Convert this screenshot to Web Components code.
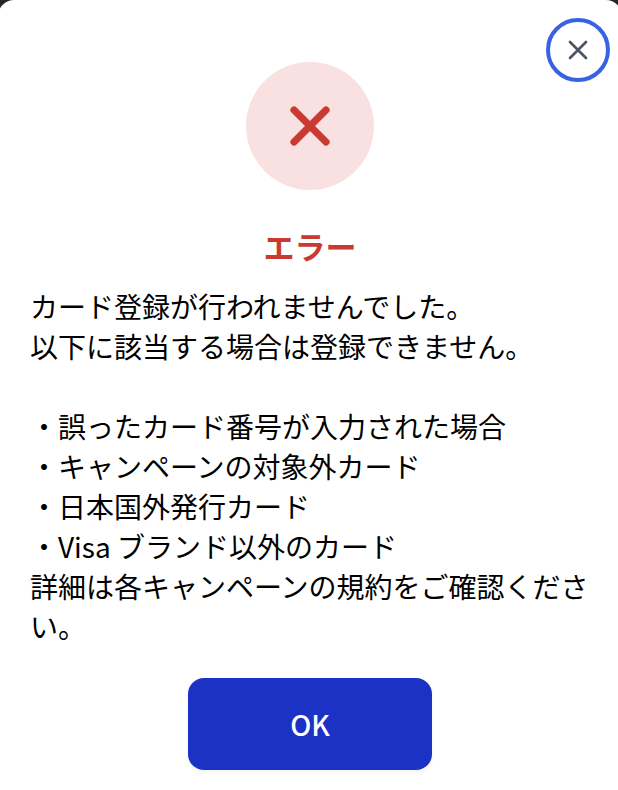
<!DOCTYPE html>
<html lang="ja">
<head>
<meta charset="utf-8">
<meta name="viewport" content="width=device-width, initial-scale=1">
<title>エラー</title>
<style>
  body {
    margin: 0;
    min-height: 100vh;
    display: grid;
    overflow: hidden;
    background: #26262a;
    font-family: "Noto Sans CJK JP", sans-serif;
    font-size: 28px;
    line-height: 40px;
    color: #000;
  }
</style>
</head>
<body>

<error-dialog>
  <close-button slot="close"></close-button>
  <error-icon slot="icon"></error-icon>
  <span slot="title">エラー</span>
  <error-message></error-message>
  <ok-button slot="action">OK</ok-button>
</error-dialog>

<script>
const dialogTemplate = document.createElement("template");
dialogTemplate.innerHTML = /*html*/ `
  <style>
    :host {
      display: block;
      position: relative;
      box-sizing: border-box;
      margin: 0 -4px 0 -2px;
      padding: 62px 32px 20px;
      border-radius: 16px 16px 0 0;
      background: #fff;
    }
    section {
      display: flex;
      flex-direction: column;
    }
    h1 {
      margin: 36px 0 20px;
      font-size: 31px;
      font-weight: 700;
      line-height: 40px;
      text-align: center;
      color: #c93a32;
    }
    .icon,
    .action {
      display: flex;
      justify-content: center;
    }
    .action {
      margin-top: 32px;
    }
    /* floats over the corner of the dialog */
    .close {
      position: absolute;
      top: 18px;
      right: 12px;
    }
  </style>
  <section role="dialog" aria-modal="true" aria-labelledby="title">
    <div class="icon"><slot name="icon"></slot></div>
    <h1 id="title"><slot name="title"></slot></h1>
    <slot></slot>
    <div class="action"><slot name="action"></slot></div>
    <div class="close"><slot name="close"></slot></div>
  </section>
`;

class ErrorDialog extends HTMLElement {
  constructor() {
    super();
    this.attachShadow({ mode: "open" });
    this.shadowRoot.appendChild(dialogTemplate.content.cloneNode(true));
  }

  connectedCallback() {
    this.addEventListener("dialog-close", () => this.close());
  }

  close() {
    this.hidden = true;
    this.style.display = "none";
  }
}
customElements.define("error-dialog", ErrorDialog);

const iconTemplate = document.createElement("template");
iconTemplate.innerHTML = /*html*/ `
  <style>
    :host {
      display: flex;
      align-items: center;
      justify-content: center;
      width: 128px;
      height: 128px;
      border-radius: 50%;
      background: #fae1e1;
      color: #c93a32;
    }
    svg {
      width: 64px;
      height: 64px;
    }
  </style>
  <svg viewBox="0 0 24 24" fill="none" stroke="currentColor" stroke-width="2.7" stroke-linecap="round" stroke-linejoin="round" aria-hidden="true">
    <path d="M6 18L18 6M6 6l12 12"/>
  </svg>
`;

class ErrorIcon extends HTMLElement {
  constructor() {
    super();
    this.attachShadow({ mode: "open" });
    this.shadowRoot.appendChild(iconTemplate.content.cloneNode(true));
  }
}
customElements.define("error-icon", ErrorIcon);

const messageTemplate = document.createElement("template");
messageTemplate.innerHTML = /*html*/ `
  <style>
    :host {
      display: block;
    }
    p {
      margin: 0;
    }
    ul {
      margin: 40px 0 0;
      padding: 0;
      list-style: none;
    }
  </style>
  <p>カード登録が行われませんでした。<br>以下に該当する場合は登録できません。</p>
  <ul>
    <li>・誤ったカード番号が入力された場合</li>
    <li>・キャンペーンの対象外カード</li>
    <li>・日本国外発行カード</li>
    <li>・Visa ブランド以外のカード</li>
  </ul>
  <p>詳細は各キャンペーンの規約をご確認ください。</p>
`;

class ErrorMessage extends HTMLElement {
  constructor() {
    super();
    this.attachShadow({ mode: "open" });
    this.shadowRoot.appendChild(messageTemplate.content.cloneNode(true));
  }
}
customElements.define("error-message", ErrorMessage);

const closeTemplate = document.createElement("template");
closeTemplate.innerHTML = /*html*/ `
  <style>
    :host {
      display: block;
    }
    button {
      display: flex;
      align-items: center;
      justify-content: center;
      box-sizing: border-box;
      width: 64px;
      height: 64px;
      padding: 0;
      border: 4px solid #3662e3;
      border-radius: 50%;
      background: #fff;
      color: #4b5563;
      cursor: pointer;
    }
    svg {
      width: 32px;
      height: 32px;
    }
  </style>
  <button type="button" aria-label="閉じる">
    <svg viewBox="0 0 24 24" fill="none" stroke="currentColor" stroke-width="2" stroke-linecap="round" stroke-linejoin="round" aria-hidden="true">
      <path d="M6 18L18 6M6 6l12 12"/>
    </svg>
  </button>
`;

class CloseButton extends HTMLElement {
  constructor() {
    super();
    this.attachShadow({ mode: "open" });
    this.shadowRoot.appendChild(closeTemplate.content.cloneNode(true));
    this.button = this.shadowRoot.querySelector("button");
    this.button.addEventListener("click", () => {
      this.dispatchEvent(new CustomEvent("dialog-close", { bubbles: true }));
    });
  }
}
customElements.define("close-button", CloseButton);

const okTemplate = document.createElement("template");
okTemplate.innerHTML = /*html*/ `
  <style>
    :host {
      display: block;
    }
    button {
      min-width: 244px;
      padding: 26px 32px;
      border: 0;
      border-radius: 16px;
      background: #1c32c4;
      box-shadow: 0 2px 4px rgba(0, 0, 0, 0.05);
      color: #fff;
      font: inherit;
      font-weight: 500;
      cursor: pointer;
    }
    button:hover {
      background: #1a2da8;
    }
  </style>
  <button type="button"><slot></slot></button>
`;

class OkButton extends HTMLElement {
  constructor() {
    super();
    this.attachShadow({ mode: "open" });
    this.shadowRoot.appendChild(okTemplate.content.cloneNode(true));
    this.button = this.shadowRoot.querySelector("button");
    this.button.addEventListener("click", () => {
      this.dispatchEvent(new CustomEvent("dialog-close", { bubbles: true }));
    });
  }
}
customElements.define("ok-button", OkButton);
</script>
</body>
</html>
